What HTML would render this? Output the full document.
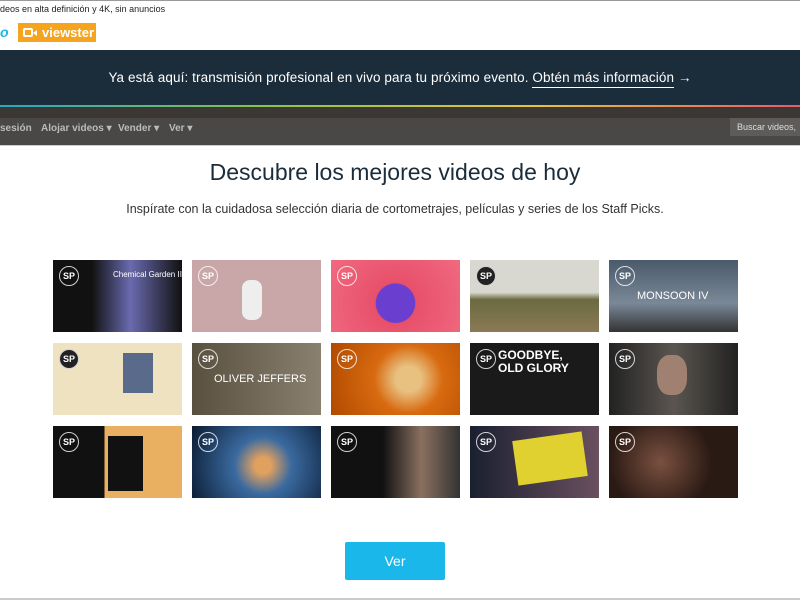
<!DOCTYPE html>
<html><head><meta charset="utf-8"><style>
*{margin:0;padding:0;box-sizing:border-box}
body{width:800px;height:600px;overflow:hidden;background:#fff;font-family:"Liberation Sans",sans-serif;position:relative}
.a{position:absolute}
.t{position:absolute;width:129px;height:72px;overflow:hidden}
.sp{position:absolute;left:6px;top:6px;color:#fff;font-size:9px;font-weight:bold;border:1px solid rgba(255,255,255,.8);border-radius:50%;width:20px;height:20px;line-height:18px;text-align:center}
</style></head><body>
<div class="a" style="left:0;top:0;width:800px;height:1px;background:#999"></div>
<div class="a" style="left:0;top:4px;font-size:9px;color:#222">deos en alta definición y 4K, sin anuncios</div>
<div class="a" style="left:0;top:24px;font-size:14px;font-weight:bold;color:#1ab7ea;font-style:italic">o</div>
<div class="a" style="left:18px;top:23px;width:78px;height:19px;background:#f4a41e;color:#fff;font-weight:bold;font-size:13px;line-height:19px;padding-left:24px">viewster<span class="a" style="left:5px;top:5px;width:10px;height:9px;border:2px solid #fff;border-radius:2px"></span><span class="a" style="left:15px;top:7px;width:0;height:0;border-right:4px solid #fff;border-top:3px solid transparent;border-bottom:3px solid transparent"></span></div>
<div class="a" style="left:0;top:50px;width:800px;height:55px;background:#1b2d3b;color:#fff;font-size:13.5px;text-align:center;line-height:55px;letter-spacing:.1px">Ya está aquí: transmisión profesional en vivo para tu próximo evento. <span style="border-bottom:1px solid #fff;padding-bottom:2px">Obtén más información</span> →</div>
<div class="a" style="left:0;top:105px;width:800px;height:2px;background:linear-gradient(90deg,#2aa6c0,#8bc34a,#e8c33a,#e85a6a)"></div>
<div class="a" style="left:0;top:107px;width:800px;height:11px;background:#3a3735"></div>
<div class="a" style="left:0;top:118px;width:800px;height:27px;background:#4a4846;color:#bbb;font-size:10px;font-weight:bold;line-height:17px"><span class="a" style="left:0;top:2px">sesión</span><span class="a" style="left:41px;top:2px">Alojar videos ▾</span><span class="a" style="left:118px;top:2px">Vender ▾</span><span class="a" style="left:169px;top:2px">Ver ▾</span>
<div class="a" style="left:730px;top:0;width:70px;height:18px;background:#5e5c5a;color:#ddd;font-weight:normal;font-size:9px;padding-left:7px;line-height:18px">Buscar videos,</div></div>
<div class="a" style="left:0;top:145px;width:800px;height:1px;background:#ccc"></div>
<div class="a" style="left:0;top:159px;width:790px;text-align:center;font-size:23px;color:#1b2d3b">Descubre los mejores videos de hoy</div>
<div class="a" style="left:0;top:202px;width:790px;text-align:center;font-size:12.5px;color:#333">Inspírate con la cuidadosa selección diaria de cortometrajes, películas y series de los Staff Picks.</div>

<div class="t" style="left:53px;top:260px;background:linear-gradient(90deg,#111 30%,#6a6ab0 60%,#111)"><div class="sp">SP</div><div class="a" style="left:60px;top:10px;color:#fff;font-size:8px">Chemical Garden II</div></div>
<div class="t" style="left:192px;top:260px;background:#c9a7a8"><div class="sp">SP</div><div class="a" style="left:50px;top:20px;width:20px;height:40px;background:#eee;border-radius:8px"></div></div>
<div class="t" style="left:331px;top:260px;background:radial-gradient(circle at 50% 60%,#6a3fd0 25%,#e8506a 26%,#f06a80)"><div class="sp">SP</div></div>
<div class="t" style="left:470px;top:260px;background:linear-gradient(180deg,#d8d8d0 45%,#6b6a40 55%,#8a7a55)"><div class="sp" style="background:#222">SP</div></div>
<div class="t" style="left:609px;top:260px;background:linear-gradient(180deg,#4a5a6a,#7a8898 60%,#333)"><div class="sp">SP</div><div class="a" style="left:28px;top:30px;color:#fff;font-size:11px">MONSOON IV</div></div>

<div class="t" style="left:53px;top:343px;background:#efe2c0"><div class="sp" style="background:#222">SP</div><div class="a" style="left:70px;top:10px;width:30px;height:40px;background:#5a6a8a"></div></div>
<div class="t" style="left:192px;top:343px;background:linear-gradient(90deg,#5a5040,#8a8070)"><div class="sp">SP</div><div class="a" style="left:22px;top:30px;color:#fff;font-size:11px">OLIVER JEFFERS</div></div>
<div class="t" style="left:331px;top:343px;background:radial-gradient(circle at 60% 50%,#e8c080 15%,#d86a10 40%,#b04a00)"><div class="sp">SP</div></div>
<div class="t" style="left:470px;top:343px;background:#1a1a1a"><div class="sp">SP</div><div class="a" style="left:28px;top:6px;color:#fff;font-size:12px;font-weight:bold;line-height:13px">GOODBYE,<br>OLD GLORY</div></div>
<div class="t" style="left:609px;top:343px;background:linear-gradient(90deg,#222,#5a5550,#222)"><div class="sp">SP</div><div class="a" style="left:48px;top:12px;width:30px;height:40px;background:#a08070;border-radius:40%"></div></div>

<div class="t" style="left:53px;top:426px;background:linear-gradient(90deg,#111 40%,#e8b060 40%)"><div class="sp">SP</div><div class="a" style="left:55px;top:10px;width:35px;height:55px;background:#111"></div></div>
<div class="t" style="left:192px;top:426px;background:radial-gradient(circle at 55% 55%,#e0a060 10%,#3a6aa0 35%,#0a1a30)"><div class="sp">SP</div></div>
<div class="t" style="left:331px;top:426px;background:linear-gradient(90deg,#111 40%,#8a7060 70%,#333)"><div class="sp">SP</div></div>
<div class="t" style="left:470px;top:426px;background:linear-gradient(90deg,#1a2030,#6a5060)"><div class="sp">SP</div><div class="a" style="left:45px;top:10px;width:70px;height:45px;background:#e0d030;transform:rotate(-8deg)"></div></div>
<div class="t" style="left:609px;top:426px;background:radial-gradient(circle at 40% 50%,#7a5040,#2a1a14 60%)"><div class="sp">SP</div></div>

<div class="a" style="left:345px;top:542px;width:100px;height:38px;background:#1ab7ea;border-radius:2px;color:#fff;font-size:14px;text-align:center;line-height:38px">Ver</div>
<div class="a" style="left:0;top:598px;width:800px;height:2px;background:#ccc"></div>
</body></html>
